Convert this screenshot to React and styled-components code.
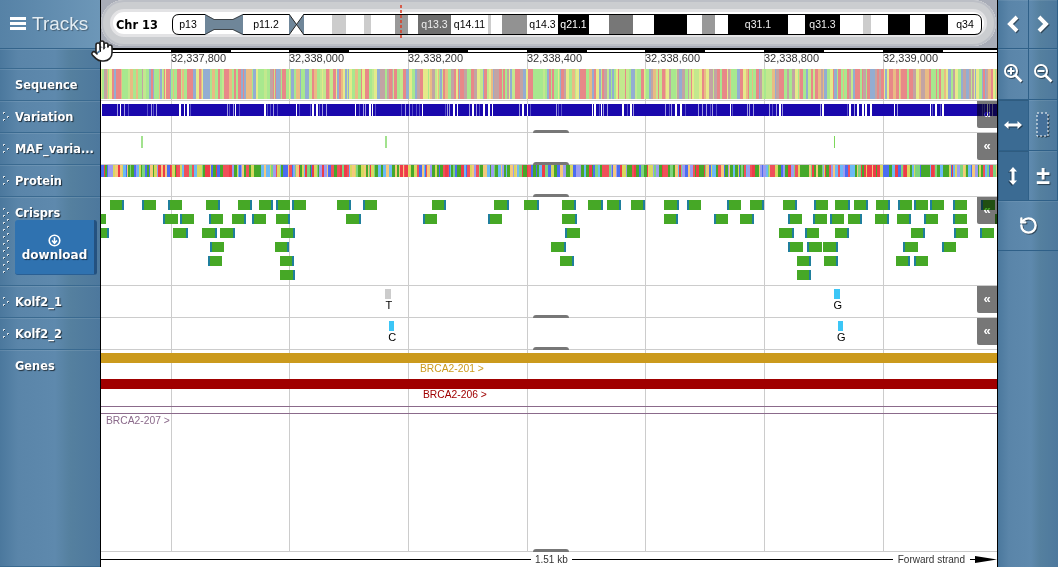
import React from "react";
import styled, { createGlobalStyle } from "styled-components";
import { Hand, RotateCcw } from "lucide-react";

const Global = createGlobalStyle`
  html, body { margin: 0; padding: 0; background: #fff; overflow: hidden; }
  * { box-sizing: border-box; }
`;

const SANS = '"Liberation Sans", Arial, sans-serif';
const BOLD = '"DejaVu Sans", Verdana, sans-serif';

const Page = styled.div`
  position: relative;
  display: grid;
  grid-template-columns: 101px 896px 61px;
  width: 1058px;
  height: 567px;
  overflow: hidden;
  font-family: ${SANS};
`;

const sidebarBg = `linear-gradient(90deg, #4b789d 0%, #5a85a9 18%, #5e89ad 55%, #55809f 70%, #4d789d 100%)`;

const LeftBar = styled.aside`
  display: flex;
  flex-direction: column;
  background: ${sidebarBg};
  border-right: 1px solid #000;
`;

const TracksHead = styled.div`
  display: flex;
  align-items: center;
  gap: 6px;
  height: 49px;
  padding: 0 0 1px 10px;
  background: linear-gradient(90deg, #5682a6, #6d97b8);
  border-bottom: 1px solid #34648b;
  color: #e4edf3;
  font-size: 19px;
  text-shadow: 1px 1px 1px rgba(0, 0, 0, 0.35);
`;

const Burger = styled.span`
  display: flex;
  flex-direction: column;
  gap: 2px;
  width: 16px;
  i { display: block; height: 3px; background: #fff; }
`;

const SideRow = styled.div`
  position: relative;
  display: flex;
  align-items: flex-start;
  height: ${(p) => p.$h}px;
  flex: ${(p) => (p.$grow ? "1" : "none")};
  padding: ${(p) => p.$pt ?? 9}px 0 0 2px;
  border-bottom: 1px solid #3a6a90;
  box-shadow: inset 0 1px 0 rgba(255, 255, 255, 0.1);
`;

const GripSlot = styled.span`
  flex: none;
  display: block;
  width: 13px;
  margin-top: 2px;
`;

const TrackName = styled.span`
  color: #fff;
  font: bold 11.4px ${BOLD};
  line-height: 14px;
  white-space: nowrap;
  text-shadow: 1px 1px 1px rgba(0, 0, 0, 0.65);
`;

const Download = styled.div`
  position: absolute;
  left: 15px;
  top: 23px;
  width: 82px;
  height: 55px;
  display: flex;
  flex-direction: column;
  align-items: center;
  justify-content: center;
  gap: 1px;
  padding-top: 1px;
  background: #2f72b0;
  border-radius: 3px;
  border-right: 3px solid #24517f;
  border-bottom: 1px solid #2a5f93;
  color: #fff;
  font: bold 12px ${BOLD};
  text-shadow: 1px 1px 1px rgba(0, 0, 0, 0.6);
`;

const Main = styled.main`
  display: flex;
  flex-direction: column;
  min-width: 0;
  background: #fff;
`;

const IdeogramBar = styled.div`
  height: 48px;
  background: #a9adb8;
  overflow: hidden;
  svg { display: block; }
`;

const Pill = styled.div`
  height: 46px;
  margin: 1px 1px 1px 0;
  border-radius: 26px;
  background: #fff;
  box-shadow:
    inset 0 0 0 2px #bcbfc6,
    inset 0 0 0 9px #cbcdd0,
    inset 0 0 0 12px #e3e3e5;
  svg { display: block; margin: -1px 0 0; }
`;

const Browser = styled.div`
  position: relative;
  flex: 1;
  display: flex;
  flex-direction: column;
`;

const GridLayer = styled.svg`
  position: absolute;
  left: 0;
  top: 0;
  width: 896px;
  height: 504px;
`;

const Ruler = styled.svg`
  display: block;
  position: relative;
  flex: none;
  width: 896px;
  height: 21px;
`;

const Row = styled.div`
  position: relative;
  flex: none;
  height: ${(p) => p.$h}px;
  border-bottom: 1px solid #ccc;
  svg { display: block; }
`;

const Handle = styled.span`
  position: absolute;
  left: 432px;
  bottom: -1px;
  width: 36px;
  height: 3px;
  background: #777;
  border-radius: 3px 3px 0 0;
`;

const Collapse = styled.span`
  position: absolute;
  top: 0;
  right: 0;
  width: 20px;
  height: 27px;
  display: flex;
  align-items: center;
  justify-content: center;
  padding-bottom: 2px;
  background: #777;
  mix-blend-mode: multiply;
  border-radius: 0 0 0 2px;
  color: #fff;
  font: bold 13px ${SANS};
`;

const ScaleBar = styled.div`
  flex: 1;
  display: flex;
  align-items: center;
  height: 15px;
  position: relative;
  font-size: 10px;
  color: #333;
`;

const ScaleLine = styled.i`
  display: block;
  height: 1px;
  background: #000;
  flex: ${(p) => (p.$w ? `0 0 ${p.$w}px` : "1")};
`;

const ScaleText = styled.span`
  padding: 0 ${(p) => p.$pad}px;
  white-space: nowrap;
`;

const RightBar = styled.aside`
  display: grid;
  grid-template-columns: 31px 29px;
  grid-template-rows: 49px 51px 51px 50px 50px 1fr;
  border-left: 1px solid #000;
  background: ${sidebarBg};
`;

const ToolBtn = styled.div`
  display: flex;
  align-items: center;
  justify-content: center;
  grid-column: ${(p) => (p.$wide ? "1 / 3" : "auto")};
  background: ${(p) => (p.$on ? "#3b6b93" : "transparent")};
  border-bottom: 1px solid #2f6088;
  border-right: ${(p) => (p.$wide ? "0" : "1px solid #2f6088")};
  box-shadow: ${(p) => (p.$on ? "inset 1px 1px 0 #2f5c80" : "inset 0 1px 0 rgba(255,255,255,.08)")};
  color: #fff;
  font: bold 25px ${SANS};
  text-shadow: 1px 1px 1px rgba(0, 0, 0, 0.5);
  svg { filter: drop-shadow(1px 1px 0.5px rgba(0, 0, 0, 0.45)); }
`;

const Cursor = styled.div`
  position: absolute;
  left: 90px;
  top: 39px;
  line-height: 0;
`;

/* ---------- data ---------- */

const rng = (seed) => {
  let s = seed;
  return () => {
    s = (s * 1664525 + 1013904223) % 4294967296;
    return s / 4294967296;
  };
};

const TICKS = [
  [171, "32,337,800"], [289, "32,338,000"], [408, "32,338,200"], [527, "32,338,400"],
  [645, "32,338,600"], [764, "32,338,800"], [883, "32,339,000"],
];

const stripes = (seed, colors, maxW = 3) => {
  const r = rng(seed);
  const out = [];
  let x = 101;
  while (x < 997) {
    const w = 1 + Math.floor(r() * maxW);
    out.push([x, Math.min(w, 997 - x), colors[Math.floor(r() * colors.length)]]);
    x += w;
  }
  return out;
};

const SEQ = stripes(11, ["#a8e88e", "#a8e88e", "#e5ea8a", "#e88888", "#e88888", "#93add2", "#e9bb84", "#c2a4a4", "#c2e88e"]);
const PROT = stripes(7, ["#46a82a", "#46a82a", "#f0505a", "#6cb9f5", "#f5c87c", "#9c9cf0", "#7ed47e", "#d8d860", "#ee3c48", "#4c6cf0"], 3);

const VAR = (() => {
  const r = rng(23);
  const out = [];
  let x = 102;
  while (x < 997) {
    x += 8 + Math.floor(r() * 32);
    const n = 2 + Math.floor(r() * 6);
    for (let i = 0; i < n && x < 997; i++) {
      const v = r();
      const w = v > 0.75 ? 2 : 1;
      out.push([x, w, v > 0.6 ? "#ffffff" : v > 0.25 ? "#a09ae2" : "#5950c8"]);
      x += w + 1 + Math.floor(r() * 3);
    }
  }
  return out;
})();

/* x, width, side of the teal edge */
const CRISPRS = [
  [[110,14,"r"],[142,14,"l"],[168,14,"l"],[206,14,"r"],[238,14,"r"],[259,14,"r"],[276,14,"l"],[292,14,"l"],[337,14,"r"],[363,14,"l"],[432,14,"r"],[494,15,"r"],[524,15,"r"],[562,14,"r"],[588,15,"r"],[607,14,"r"],[631,14,"r"],[664,15,"r"],[687,14,"l"],[727,14,"l"],[750,14,"r"],[783,14,"r"],[814,14,"l"],[835,15,"r"],[854,14,"r"],[876,14,"r"],[898,14,"l"],[914,14,"l"],[930,14,"l"],[953,14,"l"],[981,14,"l"]],
  [[101,5,"n"],[163,15,"l"],[180,14,"l"],[209,14,"l"],[232,14,"r"],[252,14,"l"],[276,14,"r"],[346,15,"r"],[423,14,"l"],[488,14,"l"],[562,15,"r"],[664,14,"r"],[714,14,"l"],[740,14,"r"],[788,14,"l"],[813,14,"l"],[830,14,"l"],[848,14,"r"],[875,14,"r"],[897,14,"r"],[924,14,"l"],[953,14,"l"],[995,2,"n"]],
  [[101,8,"r"],[173,15,"r"],[202,15,"r"],[220,15,"r"],[281,14,"r"],[565,15,"l"],[779,15,"r"],[805,14,"l"],[835,14,"r"],[911,14,"r"],[954,14,"l"],[980,14,"l"]],
  [[210,14,"l"],[275,14,"r"],[551,15,"r"],[788,15,"l"],[807,15,"l"],[823,15,"r"],[903,15,"l"],[942,14,"l"]],
  [[208,14,"l"],[280,14,"r"],[560,14,"r"],[797,14,"r"],[824,14,"r"],[896,14,"r"],[914,14,"l"]],
  [[280,15,"r"],[797,14,"r"]],
];

const BANDS = [
  [304, 28, "#fff"], [332, 14, "#ccc"], [346, 18, "#fff"], [364, 7, "#ccc"], [371, 24, "#fff"],
  [395, 13, "#999"], [408, 10, "#fff"], [418, 33, "#6e6e6e", "q13.3", "#eee"], [451, 37, "#fff", "q14.11", "#000"],
  [488, 3, "#ccc"], [491, 11, "#fff"], [502, 25, "#929292"], [527, 31, "#fff", "q14.3", "#000"],
  [558, 31, "#000", "q21.1", "#fff"], [589, 20, "#fff"], [609, 24, "#777"], [633, 21, "#fff"],
  [654, 33, "#000"], [687, 15, "#fff"], [702, 13, "#999"], [715, 13, "#fff"],
  [728, 60, "#000", "q31.1", "#eee"], [788, 17, "#fff"], [805, 35, "#000", "q31.3", "#eee"], [840, 23, "#fff"],
  [863, 8, "#ccc"], [871, 17, "#fff"], [888, 22, "#000"], [910, 15, "#fff"], [925, 23, "#000"], [948, 26, "#fff"],
];

/* ---------- drawings ---------- */

const Grip = ({ h }) => {
  const dots = [];
  for (let y = 0, i = 0; y < h - 1; y += 3.5, i++) {
    const x = i % 2 ? 5 : 1;
    const yy = Math.round(y);
    dots.push(
      <g key={i}>
        <rect x={x} y={yy} width="2" height="2" fill="#d5e0e8" />
        <rect x={x + 1} y={yy + 1} width="1" height="1" fill="#223c52" />
      </g>
    );
  }
  return (
    <GripSlot>
      <svg width="9" height={h} style={{ display: "block" }} shapeRendering="crispEdges">{dots}</svg>
    </GripSlot>
  );
};

const Ideogram = () => {
  const t = (x, y, s, fill = "#000", anchor = "middle") => (
    <text x={x} y={y} fontFamily={SANS} fontSize="10.5" fill={fill} textAnchor={anchor}>{s}</text>
  );
  return (
    <svg width="896" height="48" viewBox="101 0 896 48">
      <text x="116" y="28.5" fontFamily={BOLD} fontWeight="bold" fontSize="11.4" fill="#000">Chr 13</text>
      {BANDS.map(([x, w, c], i) => (
        <rect key={i} x={x} y="14" width={w} height="21" fill={c} />
      ))}
      <path d="M205 14.5H179Q172.5 14.5 172.5 21V28Q172.5 34.5 179 34.5H205" fill="#fff" stroke="#000" />
      <rect x="179" y="15" width="27" height="19" fill="#fff" />
      <path d="M205 14L214 19H233L243 14V35L233 30H214L205 35Z" fill="#6f8699" />
      <path d="M205 14.5L214 19.5H233L243 14.5M205 34.5L214 29.5H233L243 34.5" fill="none" stroke="#333" strokeWidth=".8" />
      <path d="M243 14.5H289M243 34.5H289" fill="none" stroke="#000" />
      <path d="M289 14L296.5 24.5L289 35Z M304 14L296.8 24.5L304 35Z" fill="#6f8699" />
      <path d="M289 14L304 35M304 14L289 35" stroke="#222" fill="none" />
      <path d="M304 14.5H975Q981.5 14.5 981.5 21V28Q981.5 34.5 975 34.5H304" fill="none" stroke="#000" />
      <rect x="949" y="15" width="26" height="19" fill="#fff" />
      {t(188, 28, "p13")}
      {t(266, 28, "p11.2")}
      {BANDS.filter((b) => b[3]).map((b) => (
        <g key={b[3]}>{t(b[0] + b[1] / 2, 28, b[3], b[4])}</g>
      ))}
      {t(965, 28, "q34")}
      <line x1="401" y1="5" x2="401" y2="40" stroke="#d8402a" strokeWidth="1.6" strokeDasharray="3 2" />
    </svg>
  );
};

const RulerArt = () => {
  const ends = [231, 349, 468, 587, 705, 824, 943];
  return (
    <Ruler viewBox="101 48 896 21">
      <rect x="108" y="48" width="889" height="2" fill="#000" />
      <rect x="108" y="52" width="889" height="1" fill="#000" />
      {TICKS.map(([x], i) => (
        <rect key={x} x={x} y="48" width={ends[i] - x} height="5" fill="#000" />
      ))}
      {TICKS.map(([x, s]) => (
        <text key={s} x={x} y="62" fontFamily={SANS} fontSize="11" fill="#333">{s}</text>
      ))}
    </Ruler>
  );
};

const Art = ({ top, h, children }) => (
  <svg width="896" height={h} viewBox={`101 ${top} 896 ${h}`} shapeRendering="crispEdges">
    {children}
  </svg>
);

const Block = ({ x, w, y, side }) => (
  <g>
    <rect x={x} y={y} width={w} height="10" fill="#46a826" />
    {side === "l" && <rect x={x} y={y} width="2" height="10" fill="#1f7f9c" />}
    {side === "r" && <rect x={x + w - 2} y={y} width="2" height="10" fill="#1f7f9c" />}
  </g>
);

const Call = ({ x, w, y, c, base }) => (
  <g>
    <rect x={x} y={y} width={w} height="10" fill={c} shapeRendering="crispEdges" />
    <text x={x + w / 2 + 0.8} y={y + 19.5} textAnchor="middle" fontFamily={SANS} fontSize="11" fill="#000" shapeRendering="auto">{base}</text>
  </g>
);

const GeneLabel = ({ x, y, c, children }) => (
  <text x={x} y={y} fontFamily={SANS} fontSize="10.3" fill={c} shapeRendering="auto">{children}</text>
);

const Chevron = ({ dir }) => (
  <svg width="16" height="20" viewBox="0 0 16 20">
    <path d={dir === "l" ? "M12 3L5 10L12 17" : "M4 3L11 10L4 17"} fill="none" stroke="#fff" strokeWidth="4" />
  </svg>
);

const Mag = ({ plus }) => (
  <svg width="20" height="20" viewBox="0 0 20 20" style={{ marginTop: -3 }}>
    <circle cx="8" cy="8" r="6" fill="none" stroke="#fff" strokeWidth="2" />
    <path d="M12.5 12.5L18.5 18.5" stroke="#fff" strokeWidth="2.6" />
    <path d={plus ? "M4.5 8H11.5M8 4.5V11.5" : "M4.5 8H11.5"} stroke="#fff" strokeWidth="2" />
  </svg>
);

const DoubleArrow = ({ vertical }) => (
  <svg width="20" height="20" viewBox="0 0 20 20" style={vertical ? { transform: "rotate(90deg)" } : undefined}>
    <path d="M1 10L5.5 6V8.5H14.5V6L19 10L14.5 14V11.5H5.5V14Z" fill="#fff" />
  </svg>
);

const DashedBox = () => (
  <svg width="14" height="26" viewBox="0 0 14 26">
    <rect x="1" y="1" width="11" height="23" fill="#46719a" stroke="#fff" strokeDasharray="2 2" />
  </svg>
);

const DownIcon = () => (
  <svg width="13" height="13" viewBox="0 0 13 13">
    <circle cx="6.5" cy="6.5" r="5.3" fill="none" stroke="#fff" strokeWidth="1.6" />
    <path d="M6.5 3.2V8.5M4 6.5L6.5 9.3L9 6.5" fill="none" stroke="#fff" strokeWidth="1.5" />
  </svg>
);

const Tracks = [
  { name: "Sequence", h: 32 },
  { name: "Variation", h: 32, grip: 10 },
  { name: "MAF_varia...", h: 32, grip: 10 },
  { name: "Protein", h: 32, grip: 10 },
  { name: "Crisprs", h: 89, grip: 66, dl: true },
  { name: "Kolf2_1", h: 32, grip: 10 },
  { name: "Kolf2_2", h: 32, grip: 10 },
];

export default function App() {
  return (
    <Page>
      <Global />
      <LeftBar>
        <TracksHead>
          <Burger><i /><i /><i /></Burger>
          Tracks
        </TracksHead>
        <SideRow $h={20} />
        {Tracks.map((t) => (
          <SideRow key={t.name} $h={t.h}>
            {t.grip ? <Grip h={t.grip} /> : <GripSlot />}
            <TrackName>{t.name}</TrackName>
            {t.dl && (
              <Download>
                <DownIcon />
                download
              </Download>
            )}
          </SideRow>
        ))}
        <SideRow $grow>
          <GripSlot />
          <TrackName>Genes</TrackName>
        </SideRow>
      </LeftBar>

      <Main>
        <IdeogramBar>
          <Pill><Ideogram /></Pill>
        </IdeogramBar>
        <Browser>
          <GridLayer viewBox="101 48 896 504">
            {TICKS.map(([x]) => (
              <rect key={x} x={x} y="48" width="1" height="504" fill="#ccc" />
            ))}
          </GridLayer>
          <RulerArt />
          <Row $h={32}>
            <Art top={69} h={31}>
              {SEQ.map(([x, w, c]) => <rect key={x} x={x} y="69" width={w} height="30" fill={c} />)}
            </Art>
          </Row>
          <Row $h={32}>
            <Art top={101} h={31}>
              <rect x="102" y="104" width="895" height="12" fill="#1a08ad" />
              {VAR.map(([x, w, c]) => <rect key={x} x={x} y="104" width={w} height="12" fill={c} />)}
            </Art>
            <Handle />
            <Collapse>«</Collapse>
          </Row>
          <Row $h={32}>
            <Art top={133} h={31}>
              <rect x="141" y="136" width="2" height="12" fill="#a2e28e" />
              <rect x="385" y="136" width="2" height="12" fill="#a2e28e" />
              <rect x="834" y="136" width="1" height="12" fill="#7cd85a" />
            </Art>
            <Handle />
            <Collapse>«</Collapse>
          </Row>
          <Row $h={32}>
            <Art top={165} h={31}>
              {PROT.map(([x, w, c]) => <rect key={x} x={x} y="165" width={w} height="12" fill={c} />)}
            </Art>
            <Handle />
          </Row>
          <Row $h={89}>
            <Art top={197} h={88}>
              {CRISPRS.map((row, r) =>
                row.map(([x, w, side]) => (
                  <Block key={`${r}-${x}`} x={x} w={w} y={200 + r * 14} side={side} />
                ))
              )}
            </Art>
            <Collapse>«</Collapse>
          </Row>
          <Row $h={32}>
            <Art top={286} h={31}>
              <Call x={385} w={6} y={289} c="#ccc" base="T" />
              <Call x={834} w={6} y={289} c="#3cc6f6" base="G" />
            </Art>
            <Handle />
            <Collapse>«</Collapse>
          </Row>
          <Row $h={32}>
            <Art top={318} h={31}>
              <Call x={389} w={5} y={321} c="#3cc6f6" base="C" />
              <Call x={838} w={5} y={321} c="#3cc6f6" base="G" />
            </Art>
            <Handle />
            <Collapse>«</Collapse>
          </Row>
          <Row $h={202}>
            <Art top={350} h={201}>
              <rect x="101" y="353" width="896" height="10" fill="#cb9a1d" />
              <GeneLabel x={420} y={372} c="#cb9a1d">BRCA2-201 &gt;</GeneLabel>
              <rect x="101" y="379" width="896" height="10" fill="#a00000" />
              <GeneLabel x={423} y={398} c="#a00000">BRCA2-206 &gt;</GeneLabel>
              <rect x="101" y="406" width="896" height="1" fill="#8b6a8b" />
              <rect x="101" y="413" width="896" height="1" fill="#8b6a8b" />
              <GeneLabel x={106} y={424} c="#8b6a8b">BRCA2-207 &gt;</GeneLabel>
            </Art>
            <Handle />
          </Row>
          <ScaleBar>
            <ScaleLine />
            <ScaleText $pad={4}>1.51 kb</ScaleText>
            <ScaleLine $w={321} />
            <ScaleText $pad={5}>Forward strand</ScaleText>
            <svg width="27" height="9" viewBox="0 0 27 9" style={{ flex: "none" }}>
              <path d="M0 4.5H6" stroke="#000" />
              <path d="M5 1L27 4.5L5 8Z" fill="#000" />
            </svg>
          </ScaleBar>
        </Browser>
      </Main>

      <RightBar>
        <ToolBtn><Chevron dir="l" /></ToolBtn>
        <ToolBtn><Chevron dir="r" /></ToolBtn>
        <ToolBtn><Mag plus /></ToolBtn>
        <ToolBtn><Mag /></ToolBtn>
        <ToolBtn $on><DoubleArrow /></ToolBtn>
        <ToolBtn><DashedBox /></ToolBtn>
        <ToolBtn $on><DoubleArrow vertical /></ToolBtn>
        <ToolBtn>±</ToolBtn>
        <ToolBtn $wide><RotateCcw size={19} color="#fff" strokeWidth={3} /></ToolBtn>
      </RightBar>

      <Cursor>
        <Hand size={24} fill="#fff" color="#222" strokeWidth={1.6} />
      </Cursor>
    </Page>
  );
}
